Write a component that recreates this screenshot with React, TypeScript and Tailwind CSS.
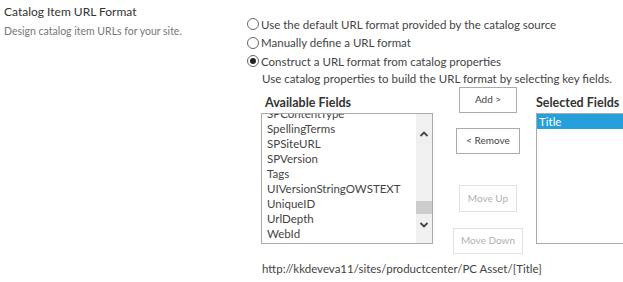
import React from "react";

const font = { fontFamily: "Lato, 'Open Sans', sans-serif" };

function Radio({ checked }: { checked?: boolean }) {
  return (
    <span className="w-[12px] h-[12px] rounded-full border border-[#666] bg-white flex items-center justify-center mr-[2px] shrink-0">
      {checked && <span className="w-[6px] h-[6px] rounded-full bg-[#222]" />}
    </span>
  );
}

function Chevron({ up }: { up?: boolean }) {
  return (
    <svg width="10" height="6" viewBox="0 0 10 6">
      <path
        d={up ? "M1.5 5 L5 1.5 L8.5 5" : "M1.5 1 L5 4.5 L8.5 1"}
        fill="none"
        stroke="#444"
        strokeWidth="1.8"
      />
    </svg>
  );
}

const items = [
  "SPContentType",
  "SpellingTerms",
  "SPSiteURL",
  "SPVersion",
  "Tags",
  "UIVersionStringOWSTEXT",
  "UniqueID",
  "UrlDepth",
  "WebId",
];

export default function App() {
  return (
    <div
      className="w-[623px] h-[282px] bg-white flex overflow-hidden text-[11.5px] text-[#444]"
      style={font}
    >
      <div className="w-[243px] shrink-0 pl-[4px] pt-[2px]">
        <div className="h-[20px] leading-[20px] text-[12px] text-[#333]">Catalog Item URL Format</div>
        <div className="h-[18px] leading-[18px] text-[10.5px] text-[#777]">
          Design catalog item URLs for your site.
        </div>
      </div>
      <div className="flex flex-col pt-[15px] pl-[4px] whitespace-nowrap">
        <label className="flex items-center h-[18.5px]">
          <Radio />
          <span>Use the default URL format provided by the catalog source</span>
        </label>
        <label className="flex items-center h-[18.5px]">
          <Radio />
          <span>Manually define a URL format</span>
        </label>
        <label className="flex items-center h-[18.5px]">
          <Radio checked />
          <span>Construct a URL format from catalog properties</span>
        </label>
        <div className="h-[16px] leading-[16px] pl-[15px]">
          Use catalog properties to build the URL format by selecting key fields.
        </div>
        <div className="flex items-start pl-[14px]">
          <div className="flex flex-col w-[172px] mt-[9px]">
            <div className="h-[17px] leading-[14px] text-[12.5px] font-bold text-[#333] pl-[4px]">
              Available Fields
            </div>
            <div className="h-[131px] border border-[#ababab] flex overflow-hidden">
              <div className="flex-1 overflow-hidden pl-[5px]">
                <div className="mt-[-8px]">
                  {items.map((it) => (
                    <div key={it} className="h-[15px] leading-[15px]">
                      {it}
                    </div>
                  ))}
                </div>
              </div>
              <div className="w-[16px] bg-[#f0f0f0] relative">
                <div className="absolute left-[3px] top-[17px] flex">
                  <Chevron up />
                </div>
                <div className="absolute left-0 w-[16px] top-[87px] h-[13px] bg-[#cdcdcd]" />
                <div className="absolute left-[3px] top-[108px] flex">
                  <Chevron />
                </div>
              </div>
            </div>
          </div>
          <div className="w-[103px] flex flex-col items-center pl-[7px]">
            <button className="w-[58px] h-[26px] border border-[#ababab] bg-white text-[10px] text-[#444]">
              Add &gt;
            </button>
            <button className="w-[64px] h-[26px] border border-[#ababab] bg-white text-[10px] text-[#444] mt-[15px]">
              &lt; Remove
            </button>
            <button className="w-[58px] h-[27px] border border-[#e1e1e1] bg-white text-[10px] text-[#b1b1b1] mt-[31px]">
              Move Up
            </button>
            <button className="w-[70px] h-[26px] border border-[#e1e1e1] bg-white text-[10px] text-[#b1b1b1] mt-[16px]">
              Move Down
            </button>
          </div>
          <div className="flex flex-col w-[100px] mt-[9px]">
            <div className="h-[17px] leading-[14px] text-[12.5px] font-bold text-[#333]">Selected Fields</div>
            <div className="h-[131px] border border-[#ababab]">
              <div className="h-[15px] leading-[15px] bg-[#26a0da] text-white pl-[2px]">Title</div>
            </div>
          </div>
        </div>
        <div className="pl-[15px] mt-[7px] h-[16px] leading-[16px]">
          http://kkdeveva11/sites/productcenter/PC Asset/[Title]
        </div>
      </div>
    </div>
  );
}
